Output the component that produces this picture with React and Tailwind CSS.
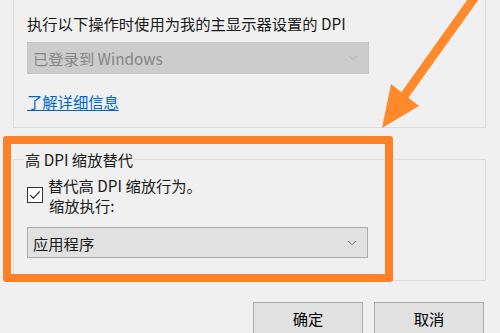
import { ChevronDown } from "lucide-react";

function Select({ value, disabled, className = "" }) {
  return (
    <div
      className={`flex items-center justify-between pl-[5px] pr-[8px] border ${
        disabled
          ? "bg-[#cccccc] border-[#c4c4c4] text-[#858585]"
          : "bg-[#e1e1e1] border-[#adadad] text-[#1a1a1a]"
      } ${className}`}
    >
      <span className="text-[15.3px] leading-[20px]">{value}</span>
      <ChevronDown
        className={`h-[14px] w-[14px] ${disabled ? "text-[#a8a8a8]" : "text-[#555]"}`}
        strokeWidth={1.5}
      />
    </div>
  );
}

export default function App() {
  return (
    <div className="relative h-[333px] w-[500px] overflow-hidden bg-[#f0f0f0] font-['Noto_Sans_CJK_SC','Noto_Sans',sans-serif] text-[#1a1a1a]">
      {/* upper group (top edge is above the crop) */}
      <div className="ml-[13px] h-[128px] w-[473px] border-x border-b border-[#dcdcdc] pl-[13px] pt-[10px]">
        <p className="text-[15.3px] leading-[26px]">执行以下操作时使用为我的主显示器设置的 DPI</p>
        <Select value="已登录到 Windows" disabled className="mt-[6px] h-[32px] w-[342px]" />
        <a className="mt-[16px] block w-fit text-[15.3px] leading-[22px] text-[#0066cc] underline underline-offset-2">
          了解详细信息
        </a>
      </div>

      {/* high DPI override group */}
      <div className="relative ml-[13px] mt-[31px] h-[122px] w-[473px] border border-[#dcdcdc] pl-[13px] pt-[15px]">
        <span className="absolute left-[10px] top-[-12px] bg-[#f0f0f0] px-[1px] text-[15.3px] leading-[22px]">
          高 DPI 缩放替代
        </span>
        <div className="flex items-center gap-[5px]">
          <span className="flex h-[16px] w-[16px] items-center justify-center border border-[#333] bg-white">
            <svg viewBox="0 0 16 16" className="h-[14px] w-[14px]">
              <path d="M2.5 8.2 L6 11.6 L13.5 3.8" fill="none" stroke="#222" strokeWidth="1.3" />
            </svg>
          </span>
          <div className="text-[15.3px] leading-[20px]">
            <p>替代高 DPI 缩放行为。</p>
            <p className="pl-[1px]">缩放执行:</p>
          </div>
        </div>
        <Select value="应用程序" className="mt-[12px] h-[31px] w-[341px]" />
      </div>

      {/* buttons */}
      <div className="mt-[21px] flex justify-end gap-[11px] pr-[16px]">
        <button className="h-[34px] w-[110px] border border-[#adadad] bg-[#e1e1e1] pb-[2px] text-[15.3px] text-black">
          确定
        </button>
        <button className="h-[34px] w-[110px] border border-[#adadad] bg-[#e1e1e1] pb-[2px] text-[15.3px] text-black">
          取消
        </button>
      </div>

      {/* orange annotation */}
      <div className="pointer-events-none absolute left-[3px] top-[136px] h-[146px] w-[390px] rounded-[3px] border-[8px] border-[#fe8027]" />
      <svg className="pointer-events-none absolute left-0 top-0" width="500" height="333" viewBox="0 0 500 333">
        <line x1="477" y1="-6" x2="397" y2="106" stroke="#fe8a2c" strokeWidth="9" />
        <polygon points="382,128 391,84 419,106" fill="#fe8a2c" />
      </svg>
    </div>
  );
}
